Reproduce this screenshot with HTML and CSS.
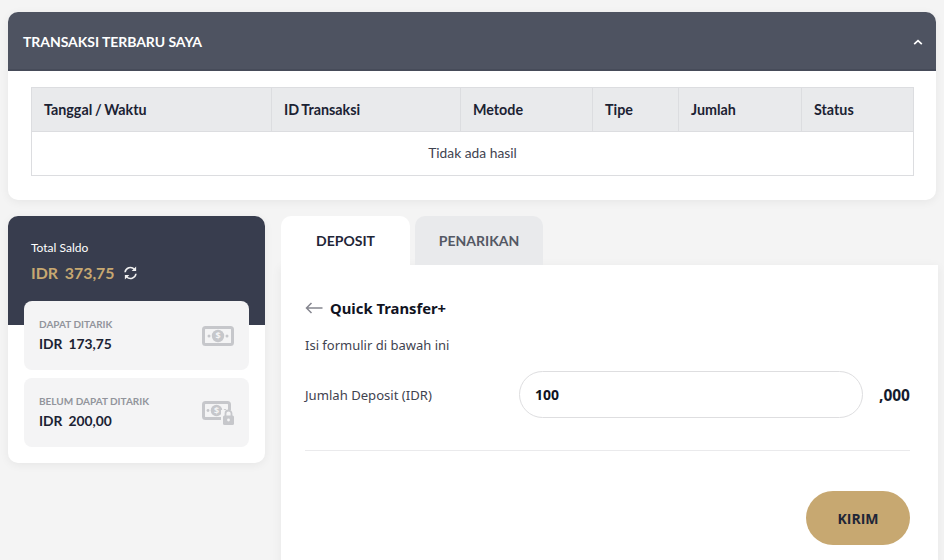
FILE: index.html
```html
<!DOCTYPE html>
<html lang="en">
<head>
    <meta charset="UTF-8">
    <meta name="viewport" content="width=device-width, initial-scale=1.0">
    <title>Deposit</title>
    <link rel="stylesheet" href="styles.css">
</head>
<body>
    <section class="recent-panel">
        <div class="recent-header">
            <h2>TRANSAKSI TERBARU SAYA</h2>
            <svg class="chevron" width="10" height="7" viewBox="0 0 10 7"><path d="M1.200 5.200 5 1.600l3.800 3.600" fill="none" stroke="#fff" stroke-width="1.700"/></svg>
        </div>
        <div class="recent-body">
            <table>
                <thead>
                    <tr>
                        <th class="col-date">Tanggal / Waktu</th>
                        <th class="col-id">ID Transaksi</th>
                        <th class="col-method">Metode</th>
                        <th class="col-type">Tipe</th>
                        <th class="col-amount">Jumlah</th>
                        <th>Status</th>
                    </tr>
                </thead>
                <tbody>
                    <tr>
                        <td colspan="6">Tidak ada hasil</td>
                    </tr>
                </tbody>
            </table>
        </div>
    </section>

    <div class="main-row">
        <aside class="balance-card">
            <div class="balance-top">
                <div class="balance-label">Total Saldo</div>
                <div class="balance-total">
                    <span>IDR&nbsp; 373,75</span>
                    <svg width="15" height="16" viewBox="0 0 16 16" fill="none" stroke="#f1f1f1" stroke-width="1.700">
                        <path d="M2.200 7.200A5.800 5.800 0 0 1 12.200 4"/>
                        <path d="M13.800 8.800A5.800 5.800 0 0 1 3.800 12"/>
                        <path d="M14 1v4.800H9.200z" fill="#f1f1f1" stroke="none"/>
                        <path d="M2 15v-4.800h4.800z" fill="#f1f1f1" stroke="none"/>
                    </svg>
                </div>
            </div>
            <div class="balance-items">
                <div class="balance-item">
                    <div>
                        <div class="item-label">DAPAT DITARIK</div>
                        <div class="item-value">IDR&nbsp; 173,75</div>
                    </div>
                    <svg class="money-icon" width="32" height="20" viewBox="0 0 32 20">
                        <rect x="1.500" y="1.500" width="29" height="17" rx="2" fill="none" stroke="#c6c7cb" stroke-width="3"/>
                        <circle cx="16" cy="10" r="6.200" fill="#c6c7cb"/>
                        <circle cx="7" cy="10" r="1.500" fill="#c6c7cb"/>
                        <circle cx="25" cy="10" r="1.500" fill="#c6c7cb"/>
                        <text x="16" y="13.200" class="money-sign">$</text>
                    </svg>
                </div>
                <div class="balance-item">
                    <div>
                        <div class="item-label">BELUM DAPAT DITARIK</div>
                        <div class="item-value">IDR&nbsp; 200,00</div>
                    </div>
                    <svg class="money-icon lock-icon" width="32" height="24" viewBox="0 0 32 24">
                        <rect x="1.500" y="1.500" width="26" height="16" rx="2" fill="none" stroke="#c6c7cb" stroke-width="3"/>
                        <circle cx="14.500" cy="9.500" r="5.800" fill="#c6c7cb"/>
                        <circle cx="6" cy="9.500" r="1.400" fill="#c6c7cb"/>
                        <circle cx="23" cy="9.500" r="1.400" fill="#c6c7cb"/>
                        <text x="14.500" y="12.700" class="money-sign">$</text>
                        <rect x="19" y="9" width="13" height="15" fill="#f4f4f5"/>
                        <path d="M23.500 15v-2.500a3 3 0 0 1 6 0V15" fill="none" stroke="#c6c7cb" stroke-width="1.800"/>
                        <rect x="21" y="14.500" width="11" height="9.500" rx="1.500" fill="#c6c7cb"/>
                        <circle cx="26.500" cy="19" r="1.400" fill="#f4f4f5"/>
                    </svg>
                </div>
            </div>
        </aside>

        <div class="transfer">
            <div class="tabs">
                <div class="tab active">DEPOSIT</div>
                <div class="tab">PENARIKAN</div>
            </div>
            <div class="tab-panel">
                <div class="panel-title">
                    <svg width="18" height="12" viewBox="0 0 18 12" fill="none" stroke="#85868f" stroke-width="1.500"><path d="M17.500 6H1.500M6.500 1 1.500 6l5 5"/></svg>
                    <h3>Quick Transfer+</h3>
                </div>
                <p class="panel-note">Isi formulir di bawah ini</p>
                <div class="amount-row">
                    <label for="amount">Jumlah Deposit (IDR)</label>
                    <input id="amount" type="text" value="100">
                    <span class="suffix">,000</span>
                </div>
                <div class="panel-actions">
                    <button type="button">KIRIM</button>
                </div>
            </div>
        </div>
    </div>
</body>
</html>
```

FILE: styles.css
```css
html, body {
    height: 560px;
    overflow: hidden;
}

body {
    margin: 0;
    padding: 12px 6px 0 8px;
    box-sizing: border-box;
    background-color: #f4f4f4;
    font-family: Lato, sans-serif;
    color: #1b2233;
}

.recent-panel {
    width: 928px;
    height: 188px;
    background-color: #fff;
    border-radius: 10px;
    box-shadow: 0 2px 10px rgba(0, 0, 0, 0.06);
    overflow: hidden;
}

.recent-header {
    height: 59px;
    padding: 1px 13px 0 15px;
    background-color: #4e5361;
    border-bottom: 2px solid #464b59;
    box-sizing: border-box;
    display: flex;
    justify-content: space-between;
    align-items: center;
}

.recent-header h2 {
    margin: 0;
    font-size: 14px;
    font-weight: 700;
    letter-spacing: -0.06px;
    color: #fff;
}

.chevron {
    margin-top: 2px;
}

.recent-body {
    padding: 16px 22px 0 23px;
}

table {
    width: 883px;
    border-collapse: collapse;
    table-layout: fixed;
    font-size: 14.300px;
}

th, td {
    border: 1px solid #dcdde0;
}

th {
    height: 44px;
    padding: 0 12px;
    background-color: #e9eaec;
    text-align: left;
    font-weight: 700;
    word-spacing: -0.8px;
    box-sizing: border-box;
}

td {
    height: 44px;
    padding: 0 0 2px;
    text-align: center;
    font-size: 13.800px;
    color: #3f4350;
    box-sizing: border-box;
}

.col-date { width: 240px; }
.col-id { width: 189px; }
.col-method { width: 132px; }
.col-type { width: 86px; }
.col-amount { width: 123px; }

.main-row {
    display: flex;
    align-items: flex-start;
    gap: 16px;
    margin-top: 16px;
}

.balance-card {
    width: 257px;
    flex-shrink: 0;
    background-color: #fff;
    border-radius: 10px;
    box-shadow: 0 2px 10px rgba(0, 0, 0, 0.06);
    padding-bottom: 16px;
}

.balance-top {
    height: 109px;
    padding: 24px 23px 0;
    box-sizing: border-box;
    background-color: #383d4e;
    border-radius: 10px 10px 0 0;
}

.balance-label {
    font-size: 12px;
    line-height: 15px;
    color: #fff;
}

.balance-total {
    margin-top: 8px;
    display: flex;
    align-items: center;
    gap: 8px;
    font-size: 15.900px;
    line-height: 20px;
    font-weight: 700;
    word-spacing: -0.5px;
    color: #c7a871;
}

.balance-items {
    margin: -24px 16px 0;
    display: flex;
    flex-direction: column;
    gap: 8px;
    position: relative;
}

.balance-item {
    height: 69px;
    padding: 0 15px;
    background-color: #f4f4f5;
    border-radius: 8px;
    display: flex;
    justify-content: space-between;
    align-items: center;
}

.item-label {
    font-size: 10px;
    line-height: 13px;
    font-weight: 700;
    color: #92949c;
}

.item-value {
    margin-top: 4px;
    font-size: 13.800px;
    line-height: 18px;
    font-weight: 700;
    word-spacing: -0.3px;
}

.money-sign {
    font-family: "Open Sans", sans-serif;
    font-size: 9px;
    font-weight: 700;
    text-anchor: middle;
    fill: #f4f4f5;
}

.transfer {
    flex: 1;
}

.tabs {
    display: flex;
    gap: 5px;
}

.tab {
    width: 128px;
    height: 49px;
    line-height: 50px;
    text-align: center;
    font-size: 14px;
    font-weight: 700;
    color: #545864;
    background-color: #e9eaec;
    border-radius: 10px 10px 0 0;
}

.tab.active {
    width: 129px;
    color: #1f2637;
    background-color: #fff;
}

.tab-panel {
    height: 320px;
    padding: 35px 28px 0 24px;
    background-color: #fff;
    box-shadow: 0 2px 10px rgba(0, 0, 0, 0.06);
    font-family: "Noto Sans", sans-serif;
}

.panel-title {
    display: flex;
    align-items: center;
    gap: 7px;
    height: 16px;
}

.panel-title h3 {
    margin: 0;
    font-size: 14.800px;
    font-weight: 700;
    color: #10131f;
}

.panel-note {
    margin: 20px 0 0;
    font-size: 13px;
    line-height: 18px;
    color: #3f4350;
}

.amount-row {
    margin-top: 17px;
    padding-bottom: 32px;
    border-bottom: 1px solid #eaeaec;
    display: flex;
    align-items: center;
}

.amount-row label {
    width: 214px;
    font-size: 13.100px;
    color: #3f4350;
}

.amount-row input {
    width: 344px;
    height: 47px;
    padding: 0 15px;
    box-sizing: border-box;
    border: 1px solid #dedee0;
    border-radius: 24px;
    background-color: #fff;
    font-family: "Noto Sans", sans-serif;
    font-size: 14px;
    font-weight: 700;
    color: #10131f;
}

.suffix {
    margin-left: auto;
    font-size: 15.500px;
    font-weight: 700;
    color: #141a2c;
}

.panel-actions {
    margin-top: 40px;
    display: flex;
    justify-content: flex-end;
}

button {
    width: 104px;
    height: 54px;
    border: none;
    border-radius: 27px;
    background-color: #c7a871;
    font-family: "Open Sans", sans-serif;
    font-size: 14px;
    font-weight: 700;
    color: #1f2637;
    cursor: pointer;
}
```
